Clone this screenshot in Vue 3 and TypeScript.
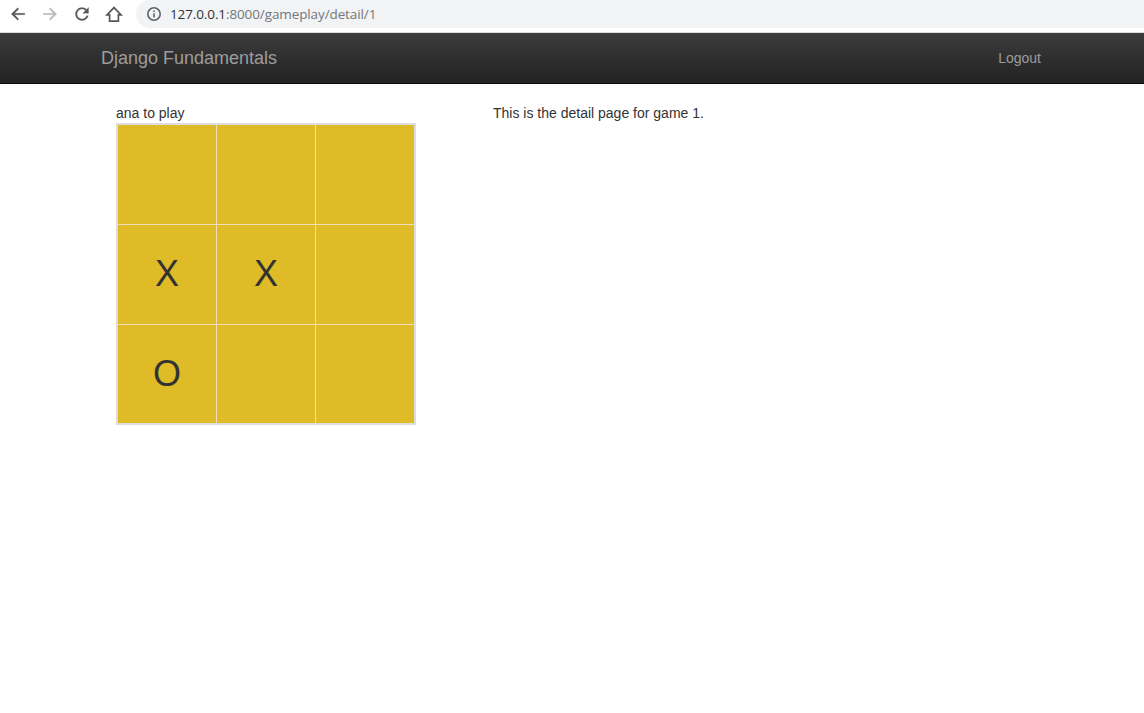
<script setup lang="ts">
type Mark = 'X' | 'O' | ''

const board: Mark[][] = [
  ['', '', ''],
  ['X', 'X', ''],
  ['O', '', ''],
]
</script>

<template>
  <div class="window">
    <div class="toolbar">
      <svg class="tool" viewBox="0 0 24 24"><path d="M21 11H7.4l5.7-5.7L11.6 3.6 3 12l8.6 8.4 1.5-1.6L7.4 13H21v-2z" /></svg>
      <svg class="tool disabled" viewBox="0 0 24 24"><path d="M3 11h13.6l-5.7-5.7 1.5-1.7L21 12l-8.6 8.4-1.5-1.6 5.7-5.8H3v-2z" /></svg>
      <svg class="tool" viewBox="1 1 22 22"><path d="M17.65 6.35C16.2 4.9 14.21 4 12 4c-4.42 0-7.99 3.58-7.99 8s3.57 8 7.99 8c3.73 0 6.84-2.55 7.73-6h-2.08c-.82 2.33-3.04 4-5.65 4-3.31 0-6-2.69-6-6s2.69-6 6-6c1.66 0 3.14.69 4.22 1.78L13 11h7V4l-2.35 2.35z" /></svg>
      <svg class="tool home" viewBox="0 0 18 18"><path d="M2 9.9h2.6v6.3h8.8V9.9H16L9 2.6z" /></svg>
      <div class="address">
        <svg class="info" viewBox="0 0 14 14"><circle cx="7" cy="7" r="6.2" /><path d="M7 6.2v4.3M7 3.4v1.6" /></svg>
        <span class="url"><span class="host">127.0.0.1</span>:8000/gameplay/detail/1</span>
      </div>
    </div>
    <nav class="navbar">
      <a class="brand">Django Fundamentals</a>
      <a class="logout">Logout</a>
    </nav>
    <main class="content">
      <section class="game">
        <div class="turn">ana to play</div>
        <div class="board">
          <template v-for="(row, r) in board" :key="r">
            <div v-for="(mark, c) in row" :key="c" class="cell">{{ mark }}</div>
          </template>
        </div>
      </section>
      <section class="detail">This is the detail page for game 1.</section>
    </main>
  </div>
</template>

<style>
body {
  margin: 0;
  background: #fff;
}
</style>

<style scoped>
.window {
  height: 713px;
  overflow: hidden;
  background: #fff;
  color: #333;
  font: 14px/20px "Liberation Sans", Arial, sans-serif;
}
.toolbar {
  display: flex;
  height: 33px;
  box-sizing: border-box;
  padding: 5px 0 0 9px;
  overflow: hidden;
  border-bottom: 1px solid #dcdddd;
}
.tool {
  flex: none;
  width: 18px;
  height: 18px;
  margin-right: 14px;
  fill: #55585c;
  stroke: #55585c;
  stroke-width: 0.3;
}
.tool.disabled {
  fill: #b9babc;
  stroke: #b9babc;
}
.tool.home {
  margin-right: 13px;
  fill: none;
  stroke-width: 1.7;
}
.address {
  display: flex;
  flex: 1;
  height: 28px;
  margin-top: -5px;
  padding-left: 11px;
  align-items: center;
  background: #f1f3f4;
  border-radius: 14px 0 0 14px;
}
.info {
  width: 14px;
  height: 14px;
  margin-right: 9px;
  fill: none;
  stroke: #5f6368;
  stroke-width: 1.6;
}
.url {
  font-family: "Open Sans", sans-serif;
  font-size: 13.5px;
  letter-spacing: -0.11px;
  color: #74777b;
  white-space: nowrap;
}
.host {
  color: #303236;
}
.navbar {
  display: flex;
  height: 51px;
  box-sizing: border-box;
  padding: 0 103px 0 101px;
  justify-content: space-between;
  line-height: 50px;
  color: #9d9d9d;
  background: linear-gradient(#3c3c3c, #222);
  border-bottom: 1px solid #080808;
}
.brand {
  font-size: 18px;
}
.content {
  display: flex;
  padding: 19px 0 0 116px;
}
.game {
  width: 377px;
}
.board {
  display: grid;
  width: 300px;
  height: 302px;
  box-sizing: border-box;
  grid-template: 99px 99px 98px / repeat(3, 98px);
  gap: 1px;
  background: #eddfb8;
  border: 2px solid #ddd;
}
.cell {
  display: flex;
  box-sizing: border-box;
  padding-bottom: 1px;
  align-items: center;
  justify-content: center;
  background: #debb27;
  font-size: 36px;
  line-height: 40px;
}
</style>
